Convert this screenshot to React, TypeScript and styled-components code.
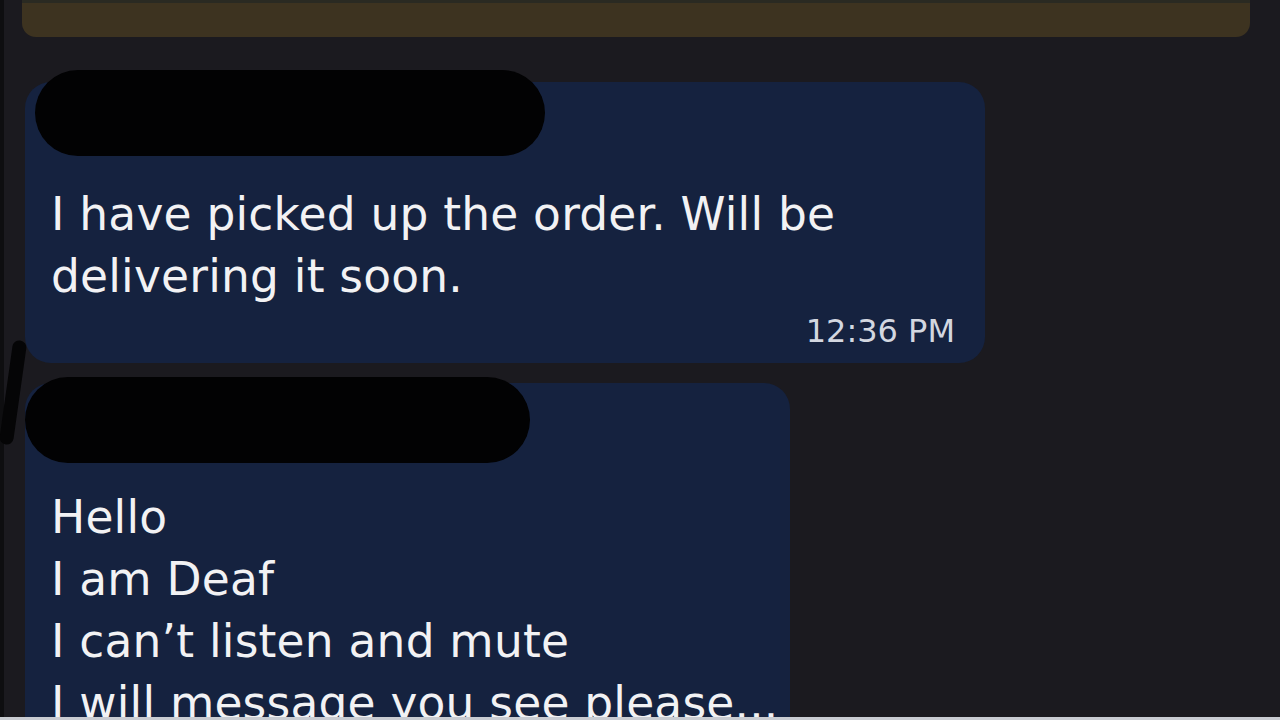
import React from 'react';
import styled, { createGlobalStyle } from 'styled-components';

const GlobalStyle = createGlobalStyle`
  html, body {
    margin: 0;
    padding: 0;
    background: #1b1a1f;
    overflow: hidden;
  }
`;

export default function App() {
  return (
    <Screen>
      <GlobalStyle />
      <EdgeStrip />
      <Feed>
        <Banner />
        <Bubble $width={960} $top={45}>
          <Redaction $left={10} $top={-12} $width={510} $height={86} />
          <Body $paddingTop={102}>
            <Line>I have picked up the order. Will be</Line>
            <Line>delivering it soon.</Line>
          </Body>
          <Time>12:36 PM</Time>
        </Bubble>
        <Bubble $width={765} $top={20}>
          <Redaction $left={0} $top={-6} $width={505} $height={86} />
          <Body $paddingTop={104}>
            <Line>Hello</Line>
            <Line>I am Deaf</Line>
            <Line>I can’t listen and mute</Line>
            <Line>I will message you see please...</Line>
          </Body>
        </Bubble>
      </Feed>
      <Stroke />
      <BottomRule />
    </Screen>
  );
}

const Screen = styled.div`
  position: relative;
  width: 1280px;
  height: 720px;
  overflow: hidden;
  background: #1b1a1f;
  font-family: 'DejaVu Sans', 'Noto Sans', sans-serif;
`;

const EdgeStrip = styled.div`
  position: absolute;
  left: 0;
  top: 0;
  bottom: 0;
  width: 4px;
  background: #0e0e10;
`;

const Feed = styled.div`
  display: flex;
  flex-direction: column;
  padding: 0 30px 0 25px;
`;

const Banner = styled.div`
  margin: 0 0 0 -3px;
  width: 1228px;
  height: 37px;
  background: #3d3320;
  border-radius: 0 0 14px 14px;
  border-top: 3px solid #2a2a22;
  box-sizing: border-box;
`;

const Bubble = styled.div<{ $width: number; $top: number }>`
  position: relative;
  width: ${(p) => p.$width}px;
  margin-top: ${(p) => p.$top}px;
  background: #15223f;
  border-radius: 26px;
  padding: 0 30px 14px 26px;
  box-sizing: border-box;
`;

const Redaction = styled.div<{ $left: number; $top: number; $width: number; $height: number }>`
  position: absolute;
  left: ${(p) => p.$left}px;
  top: ${(p) => p.$top}px;
  width: ${(p) => p.$width}px;
  height: ${(p) => p.$height}px;
  background: #020203;
  border-radius: 44px;
`;

const Body = styled.div<{ $paddingTop: number }>`
  display: flex;
  flex-direction: column;
  padding-top: ${(p) => p.$paddingTop}px;
`;

const Line = styled.div`
  color: #f2f2f4;
  font-size: 45.5px;
  line-height: 62px;
  letter-spacing: 0.2px;
  white-space: nowrap;
`;

const Time = styled.div`
  align-self: flex-end;
  text-align: right;
  color: #d3d7e0;
  font-size: 32px;
  line-height: 36px;
  margin-top: 5px;
`;

const Stroke = styled.div`
  position: absolute;
  left: 6px;
  top: 340px;
  width: 14px;
  height: 105px;
  background: #050506;
  border-radius: 8px;
  transform: rotate(8deg);
`;

const BottomRule = styled.div`
  position: absolute;
  left: 0;
  right: 0;
  bottom: 0;
  height: 3px;
  background: #c9ccd2;
`;
